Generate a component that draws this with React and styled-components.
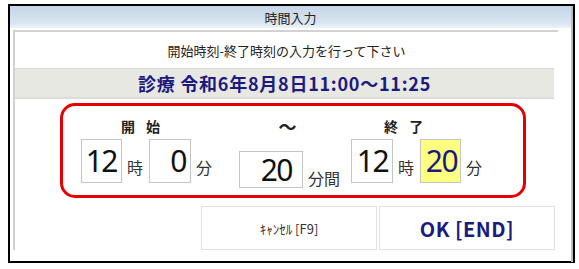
import React from 'react'
import styled, { createGlobalStyle } from 'styled-components'

const GlobalStyle = createGlobalStyle`
  html, body {
    margin: 0;
    padding: 0;
    background: #fff;
  }
  body {
    font-family: "Noto Sans CJK JP", "Noto Sans", sans-serif;
  }
`

const Page = styled.div`
  padding: 4px 0 0 8px;
`

const Window = styled.div`
  box-sizing: border-box;
  width: 567px;
  height: 259px;
  border: 2px solid #000;
  display: flex;
  flex-direction: column;
  background: #fff;
`

const TitleBar = styled.div`
  height: 22px;
  flex: none;
  display: flex;
  align-items: center;
  justify-content: center;
  font-size: 13px;
  color: #222;
  background: linear-gradient(#c4d6e8 0%, #d8e4f0 75%, #eef3f8 100%);
  border-right: 2px solid #bcbcbc;
  line-height: 1;
`

const Body = styled.div`
  flex: 1;
  display: flex;
  padding: 2px 13px 12px 3px;
  border-right: 2px solid #bcbcbc;
`

const Content = styled.div`
  flex: 1;
  display: flex;
  flex-direction: column;
  border-left: 2px solid #d2d2d2;
  border-top: 2px solid #d2d2d2;
`

const Message = styled.div`
  height: 36px;
  display: flex;
  align-items: center;
  justify-content: center;
  font-size: 13px;
  color: #222;
`

const Band = styled.div`
  height: 31px;
  margin-right: 4px;
  display: flex;
  align-items: center;
  justify-content: center;
  background: #e8e8e3;
  border-top: 1px solid #d6d6d6;
  border-bottom: 2px solid #dcdcdc;
  box-sizing: border-box;
  font-size: 18px;
  font-weight: bold;
  color: #1b1b7e;
  letter-spacing: 0.75px;
`

const RedBox = styled.div`
  box-sizing: border-box;
  width: 466px;
  height: 95px;
  margin: 4px 0 0 45px;
  border: 3px solid #e60000;
  border-radius: 15px;
  display: flex;
  padding: 10px 0 0 18px;
`

const Group = styled.div`
  display: flex;
  flex-direction: column;
  align-items: center;
  margin-right: ${p => p.$gap}px;
`

const Label = styled.div`
  height: 20px;
  display: flex;
  align-items: center;
  font-size: ${p => p.$size || 14}px;
  font-weight: bold;
  color: #222;
  padding-right: ${p => p.$shift || 0}px;
  margin-bottom: ${p => p.$space}px;
  letter-spacing: 4px;
`

const Row = styled.div`
  display: flex;
  align-items: flex-end;
`

const NumBox = styled.div`
  box-sizing: border-box;
  width: ${p => p.$w}px;
  height: ${p => p.$h}px;
  border: 1px solid #c4c4c4;
  background: ${p => (p.$hl ? '#ffff80' : '#fff')};
  color: ${p => (p.$hl ? '#1b1b7e' : '#111')};
  display: flex;
  align-items: center;
  justify-content: flex-end;
  padding-right: ${p => p.$pr}px;
  font-family: "Noto Sans", sans-serif;
  font-size: 30px;
  letter-spacing: -1.5px;
  line-height: 1;
`

const Unit = styled.div`
  font-size: 16px;
  color: #333;
  line-height: 1;
  padding: 0 ${p => p.$right}px ${p => p.$bottom}px 5px;
`

const Buttons = styled.div`
  display: flex;
  justify-content: flex-end;
  gap: 2px;
  margin-top: 8px;
  padding-right: 3px;
`

const Button = styled.div`
  box-sizing: border-box;
  width: 176px;
  height: 44px;
  border: 1px solid #e2e2e2;
  background: #fff;
  display: flex;
  align-items: center;
  justify-content: center;
  font-size: ${p => (p.$primary ? 20 : 13)}px;
  font-weight: ${p => (p.$primary ? 'bold' : 'normal')};
  color: ${p => (p.$primary ? '#1b1b7e' : '#333')};
  letter-spacing: ${p => (p.$primary ? 0.5 : 0)}px;
`

const App = () => (
  <Page>
    <GlobalStyle />
    <Window>
      <TitleBar>時間入力</TitleBar>
      <Body>
        <Content>
          <Message>開始時刻-終了時刻の入力を行って下さい</Message>
          <Band>診療 令和6年8月8日11:00～11:25</Band>
          <RedBox>
            <Group $gap={27}>
              <Label $shift={8} $space={3}>開 始</Label>
              <Row>
                <NumBox $w={41} $h={44} $pr={4}>12</NumBox>
                <Unit $right={6} $bottom={8}>時</Unit>
                <NumBox $w={42} $h={44} $pr={4}>0</NumBox>
                <Unit $right={0} $bottom={8}>分</Unit>
              </Row>
            </Group>
            <Group $gap={11}>
              <Label $size={18} $space={15}>～</Label>
              <Row>
                <NumBox $w={64} $h={37} $pr={10}>20</NumBox>
                <Unit $right={0} $bottom={2}>分間</Unit>
              </Row>
            </Group>
            <Group $gap={0}>
              <Label $shift={22} $space={3}>終 了</Label>
              <Row>
                <NumBox $w={42} $h={44} $pr={4}>12</NumBox>
                <Unit $right={6} $bottom={8}>時</Unit>
                <NumBox $w={41} $h={44} $pr={3} $hl>20</NumBox>
                <Unit $right={0} $bottom={8}>分</Unit>
              </Row>
            </Group>
          </RedBox>
          <Buttons>
            <Button>ｷｬﾝｾﾙ [F9]</Button>
            <Button $primary>OK [END]</Button>
          </Buttons>
        </Content>
      </Body>
    </Window>
  </Page>
)

export default App
